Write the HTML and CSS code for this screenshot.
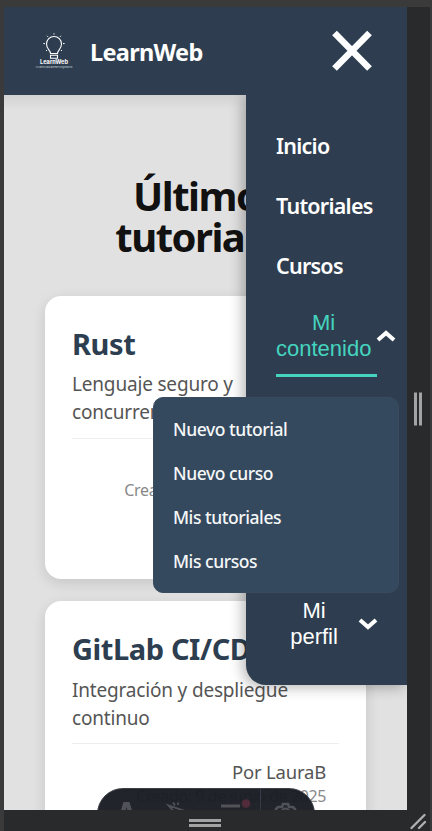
FILE: index.html
```html
<!DOCTYPE html>
<html lang="es">
<head>
<meta charset="utf-8">
<title>LearnWeb</title>
<link rel="stylesheet" href="styles.css">
</head>
<body>
<div class="frame">
  <div class="device">
    <header class="header">
      <svg class="logo" width="40" height="40" viewBox="0 0 40 40" fill="none" stroke="#fff">
        <path d="M15.500 20.500c0-3.200-4-4.500-4-9.500a7.500 7.500 0 0 1 15 0c0 5-4 6.300-4 9.500zM15.500 22.300h7v2.900h-7z" stroke-width="1.100"/>
        <path d="M19 .3v1.200M12 2.800l1 1M26 2.800l-1 1M8.400 10.600H10M28 10.600h1.600M11 18l1-1M27 18l-1-1" stroke-width="1"/>
        <text class="logo-name" x="19" y="31" textLength="28" lengthAdjust="spacingAndGlyphs">LearnWeb</text>
        <text class="logo-tag" x="19" y="34.500" textLength="37" lengthAdjust="spacingAndGlyphs">Tu camino para aprender programación</text>
      </svg>
      <span class="brand">LearnWeb</span>
      <svg class="close" width="42" height="42" viewBox="0 0 42 42" stroke="#fff" stroke-width="6.600"><path d="M3.500 3l35 35.500M38.500 3l-35 35.500"/></svg>
    </header>
    <main class="content">
      <h1 class="title"><span>Últimos</span><br><span>tutoriales</span></h1>
      <article class="card">
        <h2>Rust</h2>
        <p class="desc">Lenguaje seguro y<br>concurrente</p>
        <div class="meta"><span class="author author-empty"></span><span class="date date-long">Creado: 12 de junio de 2025</span></div>
      </article>
      <article class="card">
        <h2>GitLab CI/CD</h2>
        <p class="desc desc-low">Integración y despliegue<br>continuo</p>
        <div class="meta"><span class="author">Por LauraB</span><span class="date">Creado: 9 de junio de 2025</span></div>
      </article>
    </main>
    <nav class="menu">
      <a class="link">Inicio</a>
      <a class="link">Tutoriales</a>
      <a class="link">Cursos</a>
      <div class="group active"><span>Mi<br>contenido</span></div>
      <svg class="chev chev-up" width="20" height="14" viewBox="0 0 20 14" fill="none" stroke="#fff" stroke-width="4"><path d="M2 11L10 4l8 7"/></svg>
      <div class="group profile"><span>Mi<br>perfil</span></div>
      <svg class="chev chev-down" width="20" height="14" viewBox="0 0 20 14" fill="none" stroke="#fff" stroke-width="4"><path d="M2 3L10 10l8-7"/></svg>
    </nav>
    <div class="submenu">
      <a>Nuevo tutorial</a><a>Nuevo curso</a><a>Mis tutoriales</a><a>Mis cursos</a>
    </div>
    <div class="toolbar">
      <svg width="218" height="44" viewBox="0 0 218 44" fill="none" stroke="#505258" stroke-width="2.200">
        <path d="M25.500 13h6l6 20h-5l-1.200-4h-5.600l-1.200 4h-5zM28.500 18l-1.800 7h3.600z" fill="#505258" stroke="none" fill-rule="evenodd"/>
        <path d="M87 22L70.500 16.500l8 9M75 13.500l2 3M80 13.500v2.500" stroke-width="1.800"/>
        <path d="M123 17h19" stroke-width="3"/>
        <circle cx="148" cy="14.500" r="4.300" fill="#522b3b" stroke="none"/>
        <path d="M162.500 0v44" stroke="#343b47" stroke-width="1"/>
        <path d="M178 26l1-3-1-3 2-2h4l1-3h5l1 3h4l2 2-1 3 1 3" stroke-width="2.600"/>
        <circle cx="187.500" cy="23" r="3.500"/>
      </svg>
    </div>
  </div>
  <svg class="grip-side" width="10" height="34" viewBox="0 0 10 34" stroke="#a3a3a3" stroke-width="3"><path d="M2.500 .5v33M7.500 .5v33"/></svg>
  <svg class="grip-bottom" width="34" height="10" viewBox="0 0 34 10" stroke="#a3a3a3" stroke-width="3"><path d="M1 2.500h32M1 7.500h32"/></svg>
  <svg class="grip-corner" width="17" height="17" viewBox="0 0 17 17" stroke="#b0b0b0" stroke-width="2.300" stroke-linecap="round"><path d="M1.500 15L14.500 2M9 15l6-6"/></svg>
</div>
</body>
</html>
```
FILE: styles.css
```css
* { box-sizing: border-box; }
body { margin: 0; background: #3a3a3a; font-family: "Noto Sans", sans-serif; }
h1, h2, p { margin: 0; }
.frame { position: relative; width: 432px; height: 831px; padding: 7px 0 0 4px; background: linear-gradient(#292a2b, #292a2b) 4px 7px / 426px 824px no-repeat, #3a3a3a; overflow: hidden; }
.device { position: relative; width: 403px; height: 803px; background: #e1e1e1; overflow: hidden; }
.header { position: relative; z-index: 3; display: flex; align-items: center; height: 88px; padding: 0 34px 0 31px; background: #2e3e50; }
.header::after { content: ""; position: absolute; left: 0; top: 88px; width: 242px; height: 14px; background: linear-gradient(rgba(0,0,0,.07), transparent); }
.logo { margin-top: 3px; overflow: visible; }
.logo-name { font: 700 5.500px Inter, sans-serif; fill: #fff; stroke: none; text-anchor: middle; }
.logo-tag { font: 2.500px Inter, sans-serif; fill: #ccd2d8; stroke: none; text-anchor: middle; }
.brand { margin-left: 15px; margin-top: 2px; color: #fff; font-size: 23.500px; font-weight: 700; letter-spacing: -.7px; }
.close { margin-left: auto; margin-top: -1px; }
.content { padding: 81px 41px 0; }
.title { height: 120px; color: #111; font-size: 40px; line-height: 40.500px; letter-spacing: -1.500px; text-align: center; white-space: nowrap; }
.card { height: 283px; margin-bottom: 22px; padding: 27px; border-radius: 16px; background: #fff; box-shadow: 0 4px 14px rgba(0,0,0,.12); }
.card h2 { height: 46px; color: #2c3e50; font-size: 29px; line-height: 41px; letter-spacing: -.4px; white-space: nowrap; }
.desc { height: 70px; padding-top: 1px; border-bottom: 1px solid #eee; color: #555; font-size: 19px; line-height: 28px; letter-spacing: -.18px; white-space: nowrap; }
.desc-low { padding-top: 2px; }
.meta { display: flex; flex-direction: column; align-items: flex-end; padding: 14px 13px 0 0; white-space: nowrap; }
.author { height: 27px; color: #555; font-size: 18.500px; line-height: 27px; letter-spacing: -.2px; }
.author-empty { height: 26px; }
.date { color: #888; font-size: 16px; line-height: 22px; letter-spacing: -.4px; }
.date-long { letter-spacing: -.28px; }
.menu { position: absolute; z-index: 2; left: 242px; top: 88px; width: 161px; height: 590px; padding: 31px 30px; border-radius: 0 0 0 20px; background: #2e3e50; box-shadow: -3px 2px 14px rgba(0,0,0,.3); }
.link { display: block; height: 60px; color: #fff; font-size: 21.500px; font-weight: 600; line-height: 40px; letter-spacing: -.75px; white-space: nowrap; }
.group { color: #fff; font: 22px/26px "Liberation Sans", sans-serif; text-align: center; }
.active { width: 101px; height: 71px; padding-right: 6px; padding-top: 4px; color: #45d4bf; border-bottom: 3px solid #45d4bf; }
.profile { width: 76px; margin-top: 221px; }
.chev { position: absolute; }
.chev-up { left: 130px; top: 234px; }
.chev-down { left: 112px; top: 522px; }
.submenu { position: absolute; z-index: 4; left: 149px; top: 390px; width: 246px; height: 196px; padding: 9px 19px; border: 1px solid #384b5f; border-radius: 10px; background: #34495e; }
.submenu a { display: block; color: #f5f7f8; font-size: 17.500px; line-height: 44px; font-weight: 500; letter-spacing: -.45px; white-space: nowrap; }
.toolbar { position: absolute; z-index: 5; left: 93px; top: 781px; width: 218px; height: 52px; border: 1px solid #3b3f46; border-radius: 26px; background: linear-gradient(rgba(25,28,35,.97), rgba(32,34,41,.98)); }
.toolbar svg { display: block; }
.grip-side, .grip-bottom, .grip-corner { position: absolute; }
.grip-side { left: 413px; top: 392px; }
.grip-bottom { left: 188px; top: 818px; }
.grip-corner { left: 410px; top: 813px; }
```
